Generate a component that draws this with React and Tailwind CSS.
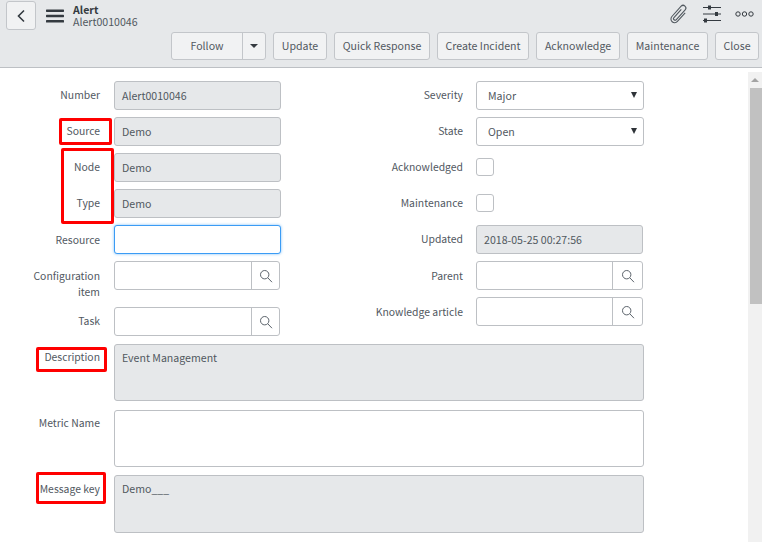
import { useState } from "react";

const Search = () => (
    <svg width="14" height="14" viewBox="0 0 14 14" fill="none" stroke="#5b636b" strokeWidth="1">
        <circle cx="5.7" cy="5.7" r="4.2" />
        <path d="M8.8 8.8l4.2 4.4" />
    </svg>
);

const labelCls = "shrink-0 text-right text-[10.4px] leading-[16px] text-[#51585f]";

const TextInput = ({ value = "", readOnly, focus }) => (
    <div
        className={`h-[29px] w-[167px] shrink-0 rounded-[3px] border flex items-center px-[7px] text-[10.6px] text-[#51585f] ${
            focus
                ? "bg-white border-[#3b9cf5] shadow-[0_0_3px_#7dbdf7]"
                : readOnly
                ? "bg-[#e6e8ea] border-[#bdc0c4]"
                : "bg-white border-[#bdc0c4]"
        }`}
    >
        {value}
    </div>
);

const Lookup = ({ wide }) => (
    <div className={`h-[29px] shrink-0 rounded-[3px] border border-[#bdc0c4] bg-white flex justify-end ${wide ? "w-[167px]" : "w-[166px]"}`}>
        <div className={`border-l border-[#bdc0c4] flex items-center justify-center ${wide ? "w-[30px]" : "w-[28px]"}`}>
            <Search />
        </div>
    </div>
);

const SelectBox = ({ value }) => (
    <div className="relative h-[29px] w-[168px] shrink-0 rounded-[3px] border border-[#bdc0c4] bg-white flex items-center pl-[11px] pt-[1px] text-[10.6px] text-[#51585f]">
        {value}
        <span className="absolute right-[6px] top-[10px] w-0 h-0 border-x-[3px] border-x-transparent border-t-[6px] border-t-[#2e3338]" />
    </div>
);

const Checkbox = () => <div className="w-[18px] h-[18px] rounded-[3px] border border-[#bdc0c4] bg-white" />;

const Row = ({ label, children, top = "pt-[6px]", right, className = "" }) => (
    <div className={`flex ${right ? "gap-[13px]" : "gap-[14px]"} ${className}`}>
        <div className={`${labelCls} ${right ? "w-[101px]" : "w-[100px]"} ${top}`}>{label}</div>
        {children}
    </div>
);

const TextArea = ({ value, readOnly, tall }) => (
    <div
        className={`${tall ? "h-[58px]" : "h-[57px]"} w-[530px] shrink-0 rounded-[3px] border border-[#bdc0c4] px-[7px] py-[5px] text-[10.6px] leading-[16px] text-[#51585f] ${
            readOnly ? "bg-[#e6e8ea]" : "bg-white"
        }`}
    >
        {value}
    </div>
);

const ToolButton = ({ children, className }) => (
    <button className={`h-[28px] rounded-[3px] border border-[#c3c6ca] bg-[#f1f2f3] text-[10.6px] text-[#51585f] whitespace-nowrap ${className}`}>
        {children}
    </button>
);

export default function App() {
    const [followed] = useState(false);

    return (
        <div className="relative h-[542px] w-[762px] overflow-hidden bg-white font-['Noto_Sans_CJK_SC','Noto_Sans',sans-serif]">
            {/* Header */}
            <div className="h-[68px] bg-[#e6e8ea] border-b border-[#bdc0c4] pl-[6px] pr-[3px] pt-[1px]">
                <div className="flex items-center h-[29px]">
                    <button className="w-[30px] h-[29px] rounded-[3px] border border-[#c3c6ca] bg-[#f1f2f3] flex items-center justify-center">
                        <svg width="10" height="14" viewBox="0 0 10 14" fill="none" stroke="#343a40" strokeWidth="1.6">
                            <path d="M8 1.5L2.5 7 8 12.5" />
                        </svg>
                    </button>
                    <svg className="ml-[10px] mt-[1px]" width="18" height="14" viewBox="0 0 18 14" fill="#343a40">
                        <rect y="0.5" width="18" height="2.4" rx="0.6" />
                        <rect y="5.8" width="18" height="2.4" rx="0.6" />
                        <rect y="11.1" width="18" height="2.4" rx="0.6" />
                    </svg>
                    <div className="ml-[9px] mt-[1px]">
                        <div className="text-[10.6px] leading-[12px] font-bold text-[#343a40]">Alert</div>
                        <div className="text-[10.6px] leading-[12px] text-[#51585f]">Alert0010046</div>
                    </div>
                    <div className="ml-auto flex items-center gap-[14px] pr-[5px] -mt-[3px]">
                        <svg width="20" height="20" viewBox="0 0 20 20" fill="none" stroke="#51585f" strokeWidth="1.1">
                            <g transform="rotate(42 10 10)">
                                <path d="M8.6 5v11a1.6 1.6 0 0 0 3.2 0V2.8a2.7 2.7 0 0 0-5.4 0V16.6a3.7 3.7 0 0 0 7.4 0V5" />
                            </g>
                        </svg>
                        <svg width="18" height="18" viewBox="0 0 18 18" fill="#343a40">
                            <rect y="2" width="18" height="1" />
                            <rect y="8.5" width="18" height="1" />
                            <rect y="15" width="18" height="1" />
                            <rect x="5" y="0.5" width="3" height="4" />
                            <rect x="12" y="7" width="3" height="4" />
                            <rect x="1" y="13.5" width="3" height="4" />
                        </svg>
                        <svg width="19" height="6" viewBox="0 0 19 6" fill="none" stroke="#343a40" strokeWidth="1">
                            <circle cx="3" cy="3" r="2.2" />
                            <circle cx="9.5" cy="3" r="2.2" />
                            <circle cx="16" cy="3" r="2.2" />
                        </svg>
                    </div>
                </div>
                <div className="flex justify-end gap-[7px] mt-[2px]">
                    <div className="flex h-[28px] rounded-[3px] border border-[#c3c6ca] bg-[#f1f2f3] text-[10.6px] text-[#51585f]">
                        <button className="w-[71px] border-r border-[#c3c6ca]">{followed ? "Unfollow" : "Follow"}</button>
                        <button className="w-[22px] flex items-center justify-center">
                            <span className="w-0 h-0 border-x-[4px] border-x-transparent border-t-[4px] border-t-[#343a40]" />
                        </button>
                    </div>
                    <ToolButton className="w-[54px]">Update</ToolButton>
                    <ToolButton className="w-[96px]">Quick Response</ToolButton>
                    <ToolButton className="w-[92px]">Create Incident</ToolButton>
                    <ToolButton className="w-[84px]">Acknowledge</ToolButton>
                    <ToolButton className="w-[81px]">Maintenance</ToolButton>
                    <ToolButton className="w-[44px]">Close</ToolButton>
                </div>
            </div>

            {/* Body */}
            <div className="flex h-[474px]">
                <div className="flex-1 pt-[13px]">
                    <div className="flex">
                        {/* Left column */}
                        <div className="w-[362px] flex flex-col gap-[7px]">
                            <Row label="Number"><TextInput value="Alert0010046" readOnly /></Row>
                            <Row label="Source"><TextInput value="Demo" readOnly /></Row>
                            <Row label="Node"><TextInput value="Demo" readOnly /></Row>
                            <Row label="Type"><TextInput value="Demo" readOnly /></Row>
                            <Row label="Resource" top="pt-[7px]"><TextInput focus /></Row>
                            <Row label={<>Configuration<br />item</>} top="pt-[7px]"><Lookup /></Row>
                            <Row label="Task"><Lookup /></Row>
                        </div>
                        {/* Right column */}
                        <div className="flex flex-col gap-[7px]">
                            <Row right label="Severity"><SelectBox value="Major" /></Row>
                            <Row right label="State"><SelectBox value="Open" /></Row>
                            <Row right label="Acknowledged">
                                <div className="h-[29px] pt-[5px]"><Checkbox /></div>
                            </Row>
                            <Row right label="Maintenance">
                                <div className="h-[29px] pt-[5px]"><Checkbox /></div>
                            </Row>
                            <Row right label="Updated"><TextInput value="2018-05-25 00:27:56" readOnly /></Row>
                            <Row right label="Parent" top="pt-[7px]"><Lookup wide /></Row>
                            <Row right label="Knowledge article" top="pt-[7px]"><Lookup wide /></Row>
                        </div>
                    </div>
                    <div className="flex flex-col gap-[8px] mt-[8px]">
                        <Row label="Description" top="pt-[5px]" className="mb-[1px]"><TextArea value="Event Management" readOnly /></Row>
                        <Row label="Metric Name" top="pt-[5px]"><TextArea /></Row>
                        <Row label="Message key" top="pt-[6px]"><TextArea value="Demo___" readOnly tall /></Row>
                    </div>
                </div>
                {/* Scrollbar */}
                <div className="w-[14px] mt-[4px] bg-[#f1f1f1] flex flex-col">
                    <div className="h-[16px] flex items-center justify-center">
                        <span className="w-0 h-0 border-x-[4px] border-x-transparent border-b-[4px] border-b-[#a3a3a3]" />
                    </div>
                    <div className="h-[216px] ml-[2px] bg-[#c1c1c1]" />
                </div>
            </div>

            {/* Red annotation boxes */}
            <div className="absolute left-[59px] top-[118px] w-[53px] h-[27px] border-[3px] border-[#ff0000] rounded-[2px]" />
            <div className="absolute left-[61px] top-[148px] w-[53px] h-[76px] border-[3px] border-[#ff0000] rounded-[2px]" />
            <div className="absolute left-[36px] top-[347px] w-[71px] h-[25px] border-[3px] border-[#ff0000] rounded-[2px]" />
            <div className="absolute left-[36px] top-[472px] w-[70px] h-[32px] border-[3px] border-[#ff0000] rounded-[2px]" />
        </div>
    );
}
